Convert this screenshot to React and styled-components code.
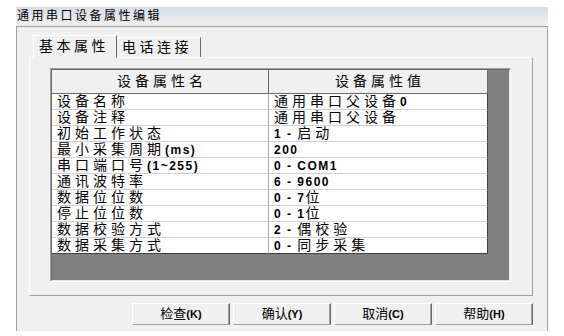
import React from 'react';
import styled, { createGlobalStyle } from 'styled-components';

const GlobalStyle = createGlobalStyle`
  body {
    margin: 0;
    background: #ffffff;
    font-family: "Liberation Sans", "Noto Sans CJK SC", sans-serif;
    color: #000000;
  }
`;

const Window = styled.div`
  width: 532px;
  margin: 7px 0 0 16px;
`;

const TitleBar = styled.div`
  height: 19px;
  line-height: 19px;
  padding-left: 1px;
  font-size: 12px;
  letter-spacing: 2.5px;
  background: linear-gradient(#d7dee7, #e4e8ec 55%, #f1efeb);
`;

const Body = styled.div`
  height: 305px;
  box-sizing: border-box;
  border: 1px solid #a0a0a0;
  border-bottom: none;
  background: #f0f0f0;
  padding: 8px 12px 0 12px;
  display: flex;
  flex-direction: column;
`;

const TabRow = styled.div`
  display: flex;
  align-items: flex-end;
  height: 22px;
  padding-left: 4px;
  position: relative;
  z-index: 1;
`;

const Tab = styled.div`
  width: 84px;
  box-sizing: border-box;
  height: ${(p) => (p.$active ? '23px' : '20px')};
  margin-bottom: ${(p) => (p.$active ? '-1px' : '0')};
  border-left: ${(p) => (p.$active ? '1px solid #ffffff' : 'none')};
  border-top: 1px solid #ffffff;
  border-right: 1px solid #696969;
  background: #f0f0f0;
  font-size: 14px;
  letter-spacing: 3.5px;
  padding-left: ${(p) => (p.$active ? '5px' : '5px')};
  line-height: ${(p) => (p.$active ? '20px' : '18px')};
`;

const Panel = styled.div`
  width: 504px;
  height: 239px;
  box-sizing: border-box;
  border-top: 1px solid #ffffff;
  border-left: 1px solid #ffffff;
  border-right: 1px solid #a0a0a0;
  border-bottom: 1px solid #a0a0a0;
  padding: 10px 20px 0 20px;
`;

const GridFrame = styled.div`
  width: 461px;
  height: 214px;
  box-sizing: border-box;
  border-top: 1px solid #a0a0a0;
  border-left: 1px solid #a0a0a0;
  border-right: 1px solid #ffffff;
  border-bottom: 1px solid #ffffff;
`;

const GridInner = styled.div`
  height: 100%;
  box-sizing: border-box;
  border-top: 1px solid #696969;
  border-left: 1px solid #696969;
  border-right: 1px solid #e3e3e3;
  border-bottom: 1px solid #e3e3e3;
  background: #808080;
`;

const Table = styled.div`
  width: 436px;
  display: grid;
  grid-template-columns: 217px 219px;
`;

const HeadCell = styled.div`
  height: 24px;
  box-sizing: border-box;
  background: #f0f0f0;
  border-right: 1px solid #696969;
  border-bottom: 1px solid #696969;
  text-align: center;
  font-size: 14px;
  letter-spacing: 4px;
  line-height: 23px;
  padding-left: 4px;
`;

const Cell = styled.div`
  height: 16px;
  box-sizing: border-box;
  background: #ffffff;
  border-right: 1px solid ${(p) => (p.$last ? '#404040' : '#a8a8a8')};
  border-bottom: 1px solid ${(p) => (p.$bottom ? '#404040' : '#d0d0d0')};
  padding-left: 5px;
  font-size: 14px;
  letter-spacing: 4px;
  line-height: 15px;
  white-space: nowrap;
  overflow: hidden;
`;

const Latin = styled.b`
  font-size: 12px;
  letter-spacing: 1.5px;
  font-weight: bold;
`;

const ButtonRow = styled.div`
  width: 504px;
  display: flex;
  justify-content: flex-end;
  gap: 3px;
  margin-top: 7px;
`;

const Button = styled.div`
  width: 98px;
  height: 22px;
  box-sizing: border-box;
  border-top: 1px solid #ffffff;
  border-left: 1px solid #ffffff;
  border-right: 1px solid #696969;
  border-bottom: 1px solid #a0a0a0;
  box-shadow: inset -1px 0 0 #a0a0a0;
  background: #f0f0f0;
  text-align: center;
  font-size: 13px;
  line-height: 20px;
`;

const ButtonKey = styled.b`
  font-size: 11px;
`;

const rows = [
  ['设备名称', '通用串口父设备0'],
  ['设备注释', '通用串口父设备'],
  ['初始工作状态', '1 - 启动'],
  ['最小采集周期(ms)', '200'],
  ['串口端口号(1~255)', '0 - COM1'],
  ['通讯波特率', '6 - 9600'],
  ['数据位位数', '0 - 7位'],
  ['停止位位数', '0 - 1位'],
  ['数据校验方式', '2 - 偶校验'],
  ['数据采集方式', '0 - 同步采集'],
];

const buttons = [
  ['检查', '(K)'],
  ['确认', '(Y)'],
  ['取消', '(C)'],
  ['帮助', '(H)'],
];

function Mixed({ text }) {
  const parts = text.split(/([\x20-\x7e]+)/).filter(Boolean);
  return parts.map((part, i) =>
    /^[\x20-\x7e]+$/.test(part) ? <Latin key={i}>{part}</Latin> : <span key={i}>{part}</span>
  );
}

export default function App() {
  return (
    <>
      <GlobalStyle />
      <Window>
        <TitleBar>通用串口设备属性编辑</TitleBar>
        <Body>
          <TabRow>
            <Tab $active>基本属性</Tab>
            <Tab>电话连接</Tab>
          </TabRow>
          <Panel>
            <GridFrame>
              <GridInner>
                <Table>
                  <HeadCell>设备属性名</HeadCell>
                  <HeadCell>设备属性值</HeadCell>
                  {rows.map(([name, value], i) => (
                    <React.Fragment key={name}>
                      <Cell $bottom={i === rows.length - 1}>
                        <Mixed text={name} />
                      </Cell>
                      <Cell $last $bottom={i === rows.length - 1}>
                        <Mixed text={value} />
                      </Cell>
                    </React.Fragment>
                  ))}
                </Table>
              </GridInner>
            </GridFrame>
          </Panel>
          <ButtonRow>
            {buttons.map(([label, key]) => (
              <Button key={label}>
                {label}
                <ButtonKey>{key}</ButtonKey>
              </Button>
            ))}
          </ButtonRow>
        </Body>
      </Window>
    </>
  );
}
